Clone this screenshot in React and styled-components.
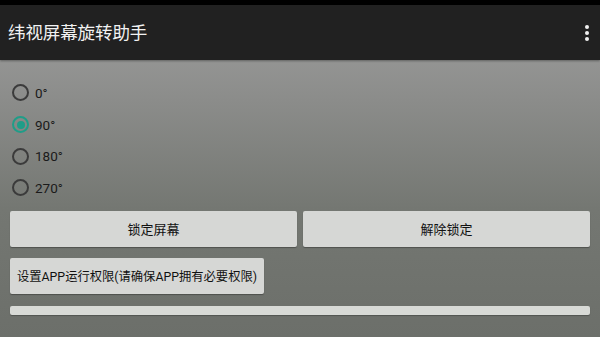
import React, { useState } from "react";
import styled, { createGlobalStyle } from "styled-components";

const GlobalStyle = createGlobalStyle`
  html, body {
    margin: 0;
    padding: 0;
    width: 600px;
    height: 337px;
    overflow: hidden;
    font-family: Roboto, "Noto Sans CJK SC", sans-serif;
  }
`;

const Screen = styled.div`
  width: 600px;
  height: 337px;
  display: flex;
  flex-direction: column;
  background: linear-gradient(180deg, #a0a0a0 0%, #8b8c8a 30%, #747772 62%, #6c6f6a 100%);
`;

const StatusBar = styled.div`
  height: 5px;
  background: #000;
`;

const ActionBar = styled.div`
  height: 55px;
  background: #212121;
  display: flex;
  align-items: center;
  justify-content: space-between;
  padding: 0 8px 0 8px;
  box-shadow: 0 1px 2px rgba(0, 0, 0, 0.35);
`;

const Title = styled.div`
  color: #f2f2f2;
  font-size: 17.5px;
  font-family: "Noto Sans CJK SC", sans-serif;
  letter-spacing: -0.1px;
  margin-top: -2px;
`;

const Overflow = styled.div`
  display: flex;
  flex-direction: column;
  gap: 2px;
  margin-right: 3px;
  span {
    width: 4px;
    height: 4px;
    border-radius: 50%;
    background: #f0f0f0;
  }
`;

const Content = styled.div`
  padding: 17px 10px 0 10px;
  display: flex;
  flex-direction: column;
`;

const RadioGroup = styled.div`
  display: flex;
  flex-direction: column;
  margin-bottom: 7px;
`;

const RadioRow = styled.label`
  height: 31.7px;
  display: flex;
  align-items: center;
  gap: 6px;
  padding-left: 2px;
  font-size: 13.5px;
  color: #1a1a1a;
  cursor: pointer;
`;

const Circle = styled.span`
  width: 13px;
  height: 13px;
  border-radius: 50%;
  border: 2px solid ${(p) => (p.$checked ? "#1f9d88" : "#3b3b3b")};
  display: flex;
  align-items: center;
  justify-content: center;
  &::after {
    content: "";
    width: 8px;
    height: 8px;
    border-radius: 50%;
    background: #1f9d88;
    display: ${(p) => (p.$checked ? "block" : "none")};
  }
`;

const ButtonRow = styled.div`
  display: flex;
  gap: 6px;
  margin-bottom: 11px;
`;

const Button = styled.button`
  flex: ${(p) => (p.$grow ? 1 : "none")};
  height: 36px;
  padding: 0 7px;
  border: none;
  border-radius: 2px;
  background: #d6d7d5;
  box-shadow: 0 1px 1px rgba(0, 0, 0, 0.3);
  font-family: Roboto, "Noto Sans CJK SC", sans-serif;
  font-size: ${(p) => (p.$small ? "12.3px" : "13px")};
  color: #111;
  cursor: pointer;
`;

const ProgressBar = styled.div`
  height: 9px;
  margin-top: 1px;
  border-radius: 2px;
  background: #d8dad6;
  box-shadow: 0 1px 1px rgba(0, 0, 0, 0.25);
`;

const angles = ["0°", "90°", "180°", "270°"];

export default function App() {
  const [angle, setAngle] = useState("90°");

  return (
    <>
      <GlobalStyle />
      <Screen>
        <StatusBar />
        <ActionBar>
          <Title>纬视屏幕旋转助手</Title>
          <Overflow>
            <span />
            <span />
            <span />
          </Overflow>
        </ActionBar>
        <Content>
          <RadioGroup>
            {angles.map((a) => (
              <RadioRow key={a} onClick={() => setAngle(a)}>
                <Circle $checked={angle === a} />
                {a}
              </RadioRow>
            ))}
          </RadioGroup>
          <ButtonRow>
            <Button $grow>锁定屏幕</Button>
            <Button $grow>解除锁定</Button>
          </ButtonRow>
          <ButtonRow>
            <Button $small>设置APP运行权限(请确保APP拥有必要权限)</Button>
          </ButtonRow>
          <ProgressBar />
        </Content>
      </Screen>
    </>
  );
}
